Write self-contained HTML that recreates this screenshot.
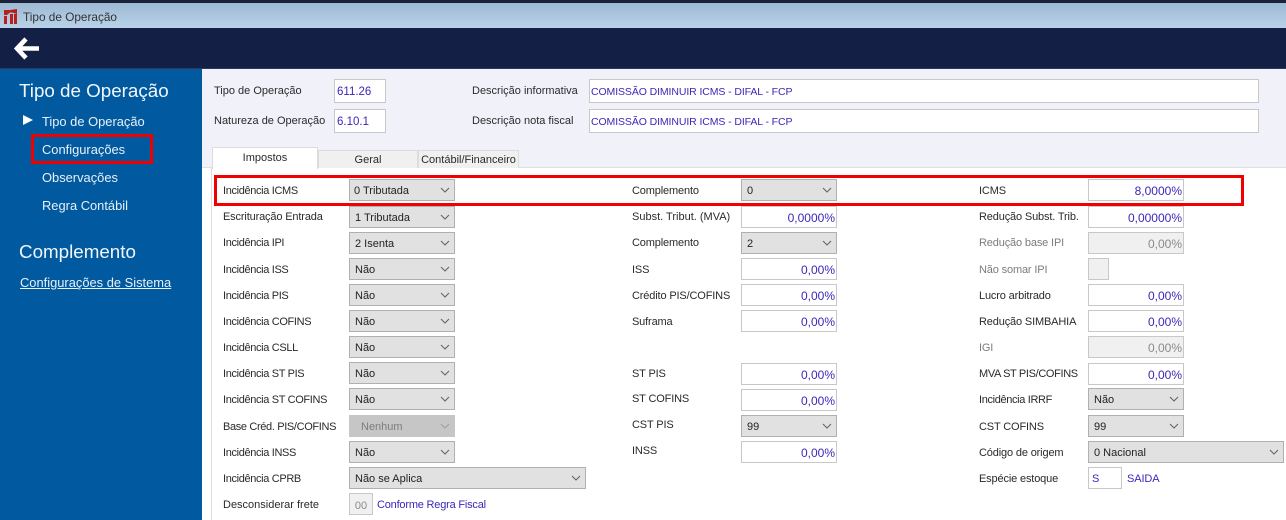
<!DOCTYPE html>
<html><head><meta charset="utf-8"><style>
html,body{margin:0;padding:0;width:1286px;height:520px;overflow:hidden;background:#fff}
body{position:relative;font-family:"Liberation Sans",sans-serif;font-size:11px;color:#2a2a2a;filter:blur(.3px)}
div,span{position:absolute;box-sizing:border-box;white-space:nowrap}
.l{line-height:14px;height:14px;margin-top:1px;letter-spacing:-.15px}
.c{letter-spacing:-.35px}
.s{height:22px;background:#e1e1e1;border:1px solid #b0b0b0;line-height:22px;padding-left:5px;color:#222}
.s svg{position:absolute;right:4px;top:7px}
.i{height:22px;background:#fff;border:1px solid #c8c8c8;line-height:23px;padding-right:1px;text-align:right;color:#3a28b8;font-size:12px}
.d{background:#f0f0f0;color:#8a8a8a}
.t{background:#fff;border:1px solid #c8c8c8;line-height:24px;padding-left:2px;color:#3a28b8;height:24px}
.g{color:#7c7c7c}
.w{color:#e8f0f8;font-size:12.9px;line-height:16px;height:16px}
.tab{background:#f0f0f0;border:1px solid #dcdcdc;border-bottom:none;text-align:center;top:150px;height:18px;line-height:18px}
</style></head><body>
<div style="left:0;top:0;width:1286px;height:3px;background:#1c2338"></div>
<div style="left:0;top:3px;width:1286px;height:25px;background:linear-gradient(#9dbad4,#b9d2e8)"></div>
<svg style="position:absolute;left:3px;top:8px" width="15" height="17" viewBox="0 0 15 17"><path d="M1 2H7L14 1V6L9 4.500H7L4 7H1ZM1 8H4V16H1ZM7 6H10V16H7ZM11 6H14V16H11Z" fill="#b8201c"/></svg>
<div class="l" style="left:23px;top:10px;color:#333;font-size:11.8px;margin-top:0;letter-spacing:0">Tipo de Operação</div>
<div style="left:0;top:28px;width:1286px;height:41px;background:#141f45;border-bottom:1px solid #2b3a5c"></div>
<svg style="position:absolute;left:14px;top:37px" width="27" height="23" viewBox="0 0 27 23"><path d="M12 2 3 11.500 12 21M4 11.500H25" fill="none" stroke="#fff" stroke-width="4.600"/></svg>
<div style="left:0;top:69px;width:202px;height:451px;background:#015a9f"></div>
<div style="left:202px;top:69px;width:1084px;height:98px;background:#f1f2f9"></div>
<div style="left:202px;top:167px;width:1084px;height:1px;background:#dfdfdf"></div>
<div style="left:211px;top:167px;width:1px;height:353px;background:#dfdfdf"></div>

<div style="left:19px;top:80px;font-size:18.8px;line-height:22px;color:#f2f6fb">Tipo de Operação</div>
<svg style="position:absolute;left:22px;top:114px" width="12" height="12"><path d="M1 1 11 6 1 11Z" fill="#fff"/></svg>
<div class="w" style="left:42px;top:114px">Tipo de Operação</div>
<div class="w" style="left:42px;top:142px">Configurações</div>
<div class="w" style="left:42px;top:170px">Observações</div>
<div class="w" style="left:42px;top:198px">Regra Contábil</div>
<div style="left:19px;top:241px;font-size:18.8px;line-height:22px;color:#f2f6fb">Complemento</div>
<div class="w" style="left:20px;top:275px;text-decoration:underline">Configurações de Sistema</div>
<div style="left:31px;top:134px;width:122px;height:30px;border:3px solid #f00000"></div>

<div class="l" style="left:214px;top:83px;letter-spacing:0">Tipo de Operação</div>
<div class="l" style="left:214px;top:113px;letter-spacing:0">Natureza de Operação</div>
<div class="t" style="left:334px;top:79px;width:52px;font-size:11.5px">611.26</div>
<div class="t" style="left:334px;top:109px;width:52px;font-size:11.5px">6.10.1</div>
<div class="l" style="left:472px;top:83px;letter-spacing:0">Descrição informativa</div>
<div class="l" style="left:472px;top:113px;letter-spacing:0">Descrição nota fiscal</div>
<div class="t" style="left:589px;top:79px;width:670px;font-size:10.5px;letter-spacing:-.1px;line-height:25px;padding-left:1px">COMISSÃO DIMINUIR ICMS - DIFAL - FCP</div>
<div class="t" style="left:589px;top:109px;width:670px;font-size:10.5px;letter-spacing:-.1px;line-height:25px;padding-left:1px">COMISSÃO DIMINUIR ICMS - DIFAL - FCP</div>

<div style="left:212px;top:147px;width:106px;height:22px;background:#fff;border:1px solid #dcdcdc;border-bottom:none;text-align:center;line-height:20px">Impostos</div>
<div class="tab" style="left:318px;width:100px">Geral</div>
<div class="tab" style="left:418px;width:101px">Contábil/Financeiro</div>

<div class="l c" style="left:223px;top:183px">Incidência ICMS</div>
<div class="l" style="left:223px;top:209px">Escrituração Entrada</div>
<div class="l c" style="left:223px;top:235px">Incidência IPI</div>
<div class="l c" style="left:223px;top:262px">Incidência ISS</div>
<div class="l c" style="left:223px;top:288px">Incidência PIS</div>
<div class="l c" style="left:223px;top:314px">Incidência COFINS</div>
<div class="l c" style="left:223px;top:340px">Incidência CSLL</div>
<div class="l c" style="left:223px;top:366px">Incidência ST PIS</div>
<div class="l c" style="left:223px;top:392px">Incidência ST COFINS</div>
<div class="l c" style="left:223px;top:419px">Base Créd. PIS/COFINS</div>
<div class="l c" style="left:223px;top:445px">Incidência INSS</div>
<div class="l c" style="left:223px;top:471px">Incidência CPRB</div>
<div class="l" style="left:223px;top:497px;letter-spacing:0">Desconsiderar frete</div>

<div class="s" style="left:349px;top:179px;width:106px;padding-left:4px">0 Tributada<svg width="10" height="7"><path d="M1 1 5 5 9 1" fill="none" stroke="#666" stroke-width="1.100"/></svg></div>
<div class="s" style="left:349px;top:206px;width:106px">1 Tributada<svg width="10" height="7"><path d="M1 1 5 5 9 1" fill="none" stroke="#666" stroke-width="1.100"/></svg></div>
<div class="s" style="left:349px;top:232px;width:106px">2 Isenta<svg width="10" height="7"><path d="M1 1 5 5 9 1" fill="none" stroke="#666" stroke-width="1.100"/></svg></div>
<div class="s" style="left:349px;top:258px;width:106px">Não<svg width="10" height="7"><path d="M1 1 5 5 9 1" fill="none" stroke="#666" stroke-width="1.100"/></svg></div>
<div class="s" style="left:349px;top:284px;width:106px">Não<svg width="10" height="7"><path d="M1 1 5 5 9 1" fill="none" stroke="#666" stroke-width="1.100"/></svg></div>
<div class="s" style="left:349px;top:310px;width:106px">Não<svg width="10" height="7"><path d="M1 1 5 5 9 1" fill="none" stroke="#666" stroke-width="1.100"/></svg></div>
<div class="s" style="left:349px;top:336px;width:106px">Não<svg width="10" height="7"><path d="M1 1 5 5 9 1" fill="none" stroke="#666" stroke-width="1.100"/></svg></div>
<div class="s" style="left:349px;top:362px;width:106px">Não<svg width="10" height="7"><path d="M1 1 5 5 9 1" fill="none" stroke="#666" stroke-width="1.100"/></svg></div>
<div class="s" style="left:349px;top:388px;width:106px">Não<svg width="10" height="7"><path d="M1 1 5 5 9 1" fill="none" stroke="#666" stroke-width="1.100"/></svg></div>
<div class="s" style="left:349px;top:415px;width:106px;background:#c6c6c6;border-color:#c6c6c6;color:#7c7c7c;padding-left:11px">Nenhum<svg width="10" height="7"><path d="M1 1 5 5 9 1" fill="none" stroke="#a0a0a0" stroke-width="1.100"/></svg></div>
<div class="s" style="left:349px;top:441px;width:106px">Não<svg width="10" height="7"><path d="M1 1 5 5 9 1" fill="none" stroke="#666" stroke-width="1.100"/></svg></div>
<div class="s" style="left:349px;top:467px;width:237px">Não se Aplica<svg width="10" height="7"><path d="M1 1 5 5 9 1" fill="none" stroke="#666" stroke-width="1.100"/></svg></div>
<div class="i d" style="left:349px;top:493px;width:24px;text-align:center;padding:0;font-size:11px;line-height:24px">00</div>
<div class="l c" style="left:377px;top:497px;color:#3a28b8;letter-spacing:-.2px">Conforme Regra Fiscal</div>

<div class="l" style="left:632px;top:183px">Complemento</div>
<div class="l" style="left:632px;top:209px;letter-spacing:0">Subst. Tribut. (MVA)</div>
<div class="l" style="left:632px;top:235px">Complemento</div>
<div class="l" style="left:632px;top:262px">ISS</div>
<div class="l" style="left:632px;top:288px">Crédito PIS/COFINS</div>
<div class="l" style="left:632px;top:314px">Suframa</div>
<div class="l" style="left:632px;top:366px">ST PIS</div>
<div class="l" style="left:632px;top:391px">ST COFINS</div>
<div class="l" style="left:632px;top:417px">CST PIS</div>
<div class="l" style="left:632px;top:443px">INSS</div>

<div class="s" style="left:741px;top:179px;width:96px">0<svg width="10" height="7"><path d="M1 1 5 5 9 1" fill="none" stroke="#666" stroke-width="1.100"/></svg></div>
<div class="i" style="left:741px;top:206px;width:96px">0,0000%</div>
<div class="s" style="left:741px;top:232px;width:96px">2<svg width="10" height="7"><path d="M1 1 5 5 9 1" fill="none" stroke="#666" stroke-width="1.100"/></svg></div>
<div class="i" style="left:741px;top:258px;width:96px">0,00%</div>
<div class="i" style="left:741px;top:284px;width:96px">0,00%</div>
<div class="i" style="left:741px;top:310px;width:96px">0,00%</div>
<div class="i" style="left:741px;top:363px;width:96px">0,00%</div>
<div class="i" style="left:741px;top:389px;width:96px">0,00%</div>
<div class="s" style="left:741px;top:415px;width:96px">99<svg width="10" height="7"><path d="M1 1 5 5 9 1" fill="none" stroke="#666" stroke-width="1.100"/></svg></div>
<div class="i" style="left:741px;top:441px;width:96px">0,00%</div>

<div class="l" style="left:979px;top:183px">ICMS</div>
<div class="l" style="left:979px;top:209px">Redução Subst. Trib.</div>
<div class="l g" style="left:979px;top:235px">Redução base IPI</div>
<div class="l g" style="left:979px;top:262px">Não somar IPI</div>
<div class="l" style="left:979px;top:288px">Lucro arbitrado</div>
<div class="l" style="left:979px;top:314px">Redução SIMBAHIA</div>
<div class="l g" style="left:979px;top:340px">IGI</div>
<div class="l c" style="left:979px;top:366px">MVA ST PIS/COFINS</div>
<div class="l c" style="left:979px;top:392px">Incidência IRRF</div>
<div class="l" style="left:979px;top:419px">CST COFINS</div>
<div class="l" style="left:979px;top:445px">Código de origem</div>
<div class="l" style="left:979px;top:471px">Espécie estoque</div>

<div class="i" style="left:1088px;top:179px;width:96px">8,0000%</div>
<div class="i" style="left:1088px;top:206px;width:96px">0,00000%</div>
<div class="i d" style="left:1088px;top:232px;width:96px">0,00%</div>
<div class="i d" style="left:1088px;top:258px;width:21px"></div>
<div class="i" style="left:1088px;top:284px;width:96px">0,00%</div>
<div class="i" style="left:1088px;top:310px;width:96px">0,00%</div>
<div class="i d" style="left:1088px;top:336px;width:96px">0,00%</div>
<div class="i" style="left:1088px;top:363px;width:96px">0,00%</div>
<div class="s" style="left:1088px;top:388px;width:96px">Não<svg width="10" height="7"><path d="M1 1 5 5 9 1" fill="none" stroke="#666" stroke-width="1.100"/></svg></div>
<div class="s" style="left:1088px;top:415px;width:96px">99<svg width="10" height="7"><path d="M1 1 5 5 9 1" fill="none" stroke="#666" stroke-width="1.100"/></svg></div>
<div class="s" style="left:1088px;top:441px;width:196px">0 Nacional<svg width="10" height="7"><path d="M1 1 5 5 9 1" fill="none" stroke="#666" stroke-width="1.100"/></svg></div>
<div class="i" style="left:1088px;top:467px;width:34px;text-align:left;padding-left:3px;font-size:11px">S</div>
<div class="l" style="left:1127px;top:471px;color:#3a28b8;letter-spacing:-.1px">SAIDA</div>

<div style="left:214px;top:175px;width:1030px;height:31px;border:3px solid #f00000"></div>
</body></html>
